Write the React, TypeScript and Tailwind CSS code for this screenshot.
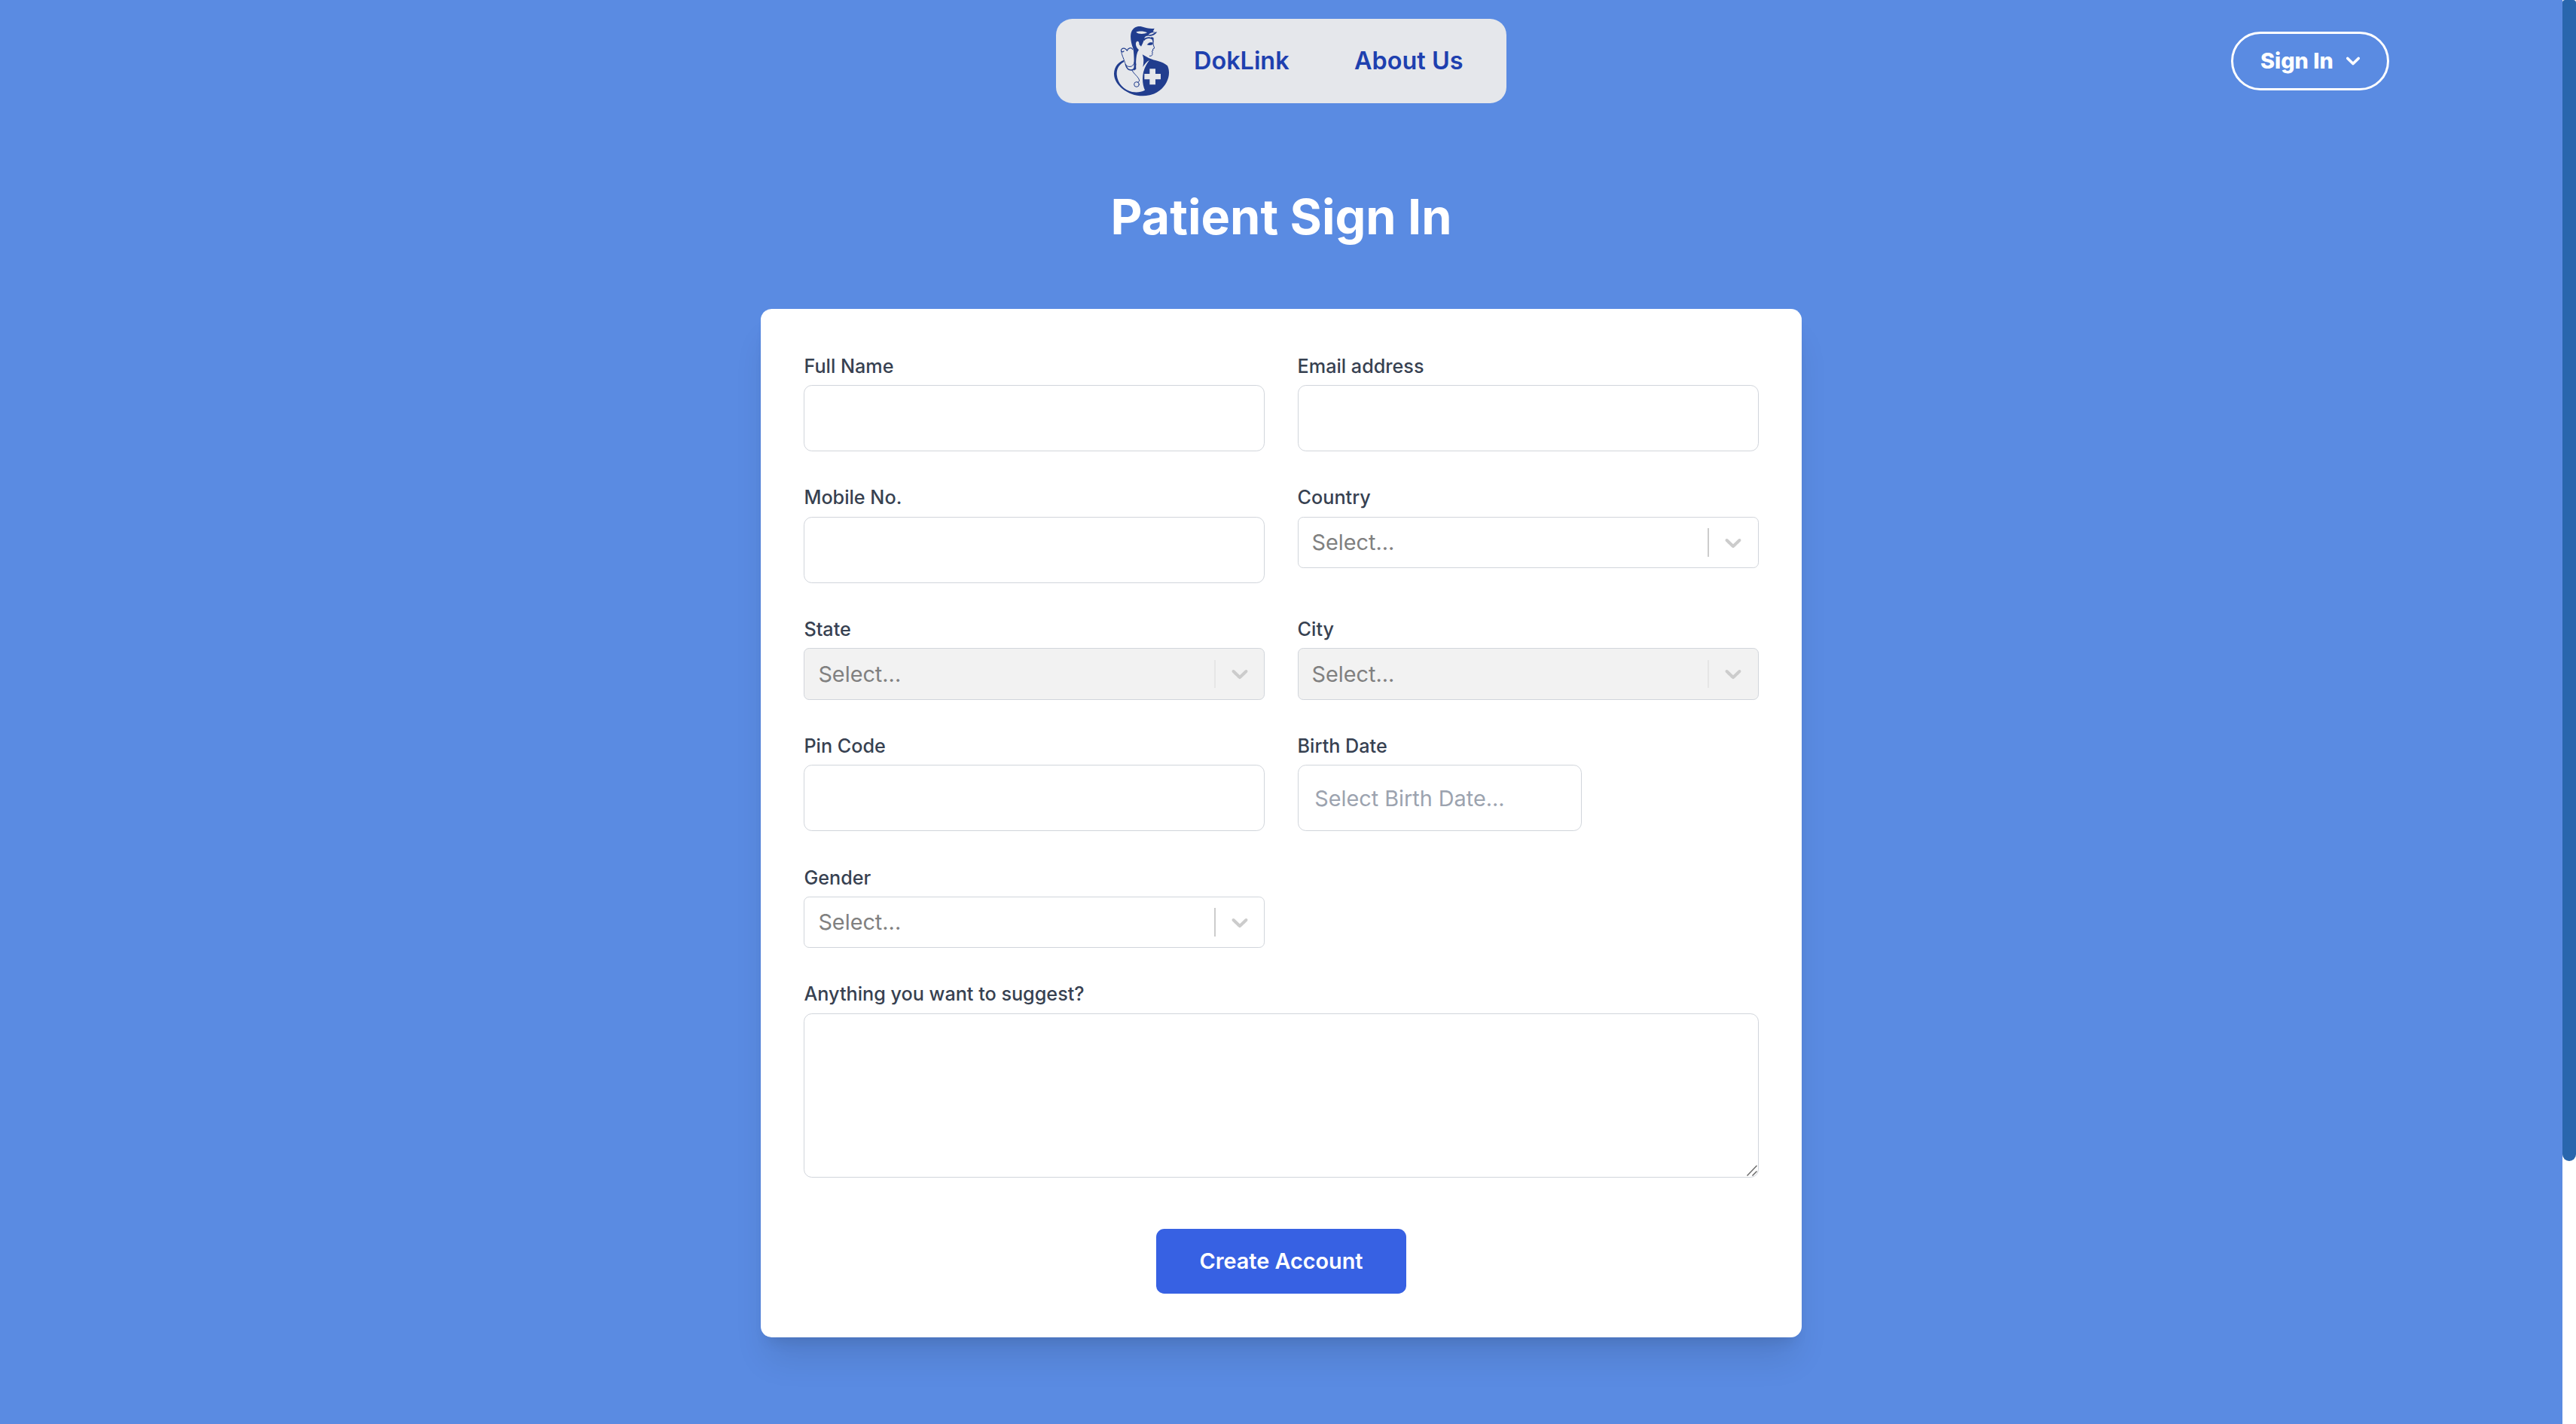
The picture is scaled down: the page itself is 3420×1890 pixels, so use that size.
import type { ReactNode } from "react";

function Logo({ className }: { className: string }) {
  return (
    <svg viewBox="55 40 230 290" className={className} fill="none" aria-hidden="true">
      <g fill="#213d8e">
        <path d="M134 134C126 114 120 84 128 66C134 52 148 44 164 46C180 50 196 57 219 54C216 59 216 62 213 66C218 69 224 70 230 68C223 80 209 86 200 84C192 82 184 84 180 90C178 99 174 112 166 126L158 118C160 108 152 100 146 110C142 120 148 132 157 140C148 150 144 176 146 216L137 222C138 196 139 160 134 134Z" />
        <path d="M174 98C184 87 200 87 206 91L207 87L214 91L216 112L209 98C198 92 186 93 178 104Z" />
        <path d="M189 119C197 109 206 109 213 111L212 119C204 122 196 122 189 119Z" />
        <path d="M171 158L196 172C222 184 250 184 271 203C286 234 272 276 240 301C208 326 164 328 128 315C88 300 58 268 58 234C59 206 76 187 98 180L97 188C79 198 68 214 69 238C72 274 98 300 130 307C150 310 166 308 181 300C171 280 170 250 175 228C180 208 190 192 199 181C188 186 180 196 173 208C176 190 178 176 171 158Z" />
      </g>
      <g stroke="#213d8e" strokeWidth="3" strokeLinecap="round" strokeLinejoin="round">
        <path d="M214 92C214 106 213 114 215 120L219 133L213 136L213 143L208 146L212 149L210 154C213 160 208 165 200 164" />
        <path d="M97 145C90 151 83 143 88 137C94 131 104 132 110 143C114 132 126 128 132 137" strokeWidth="3.6" />
        <path d="M87 145C88 160 97 174 102 192C106 206 116 207 124 206C136 204 141 190 142 172" />
        <path d="M104 198C108 214 114 220 126 220C138 220 143 210 144 196" strokeWidth="4.5" />
        <path d="M130 221C138 238 156 246 159 262C158 266 155 268 152 269" />
        <circle cx="148" cy="277" r="10" />
      </g>
      <path d="M146 69C158 64 178 65 190 71C178 77 156 78 146 69Z" fill="#e5e7eb" />
      <path d="M195 80C199 73 208 69 221 70C215 76 206 80 195 80Z" fill="#e5e7eb" />
      <path d="M200 215H223V235H244V257H223V278H200V257H179V235H200Z" fill="#e5e7eb" />
    </svg>
  );
}

function Field({ label, wide, children }: { label: string; wide?: boolean; children: ReactNode }) {
  return (
    <div className={wide ? "col-span-2" : ""}>
      <label className="mb-1 block text-sm font-medium text-[#374151]">{label}</label>
      {children}
    </div>
  );
}

function TextInput() {
  return (
    <input
      type="text"
      className="block w-full rounded-md border border-[#d1d5db] bg-white p-3 text-base outline-none"
    />
  );
}

function Select({ disabled = false }: { disabled?: boolean }) {
  return (
    <div
      className={
        "flex h-[38px] items-center rounded-[4px] border border-[#d1d5db] " +
        (disabled ? "bg-[#f2f2f2]" : "bg-white")
      }
    >
      <span className="flex-1 pl-[10px] text-base text-[#808080]">Select...</span>
      <span className={"my-2 w-px self-stretch " + (disabled ? "bg-[#e6e6e6]" : "bg-[#cccccc]")} />
      <span className="p-2 text-[#cccccc]">
        <svg viewBox="0 0 20 20" className="block size-5" fill="currentColor" aria-hidden="true">
          <path d="M4.516 7.548c0.436-0.446 1.043-0.481 1.576 0l3.908 3.747 3.908-3.747c0.533-0.481 1.141-0.446 1.574 0 0.436 0.445 0.408 1.197 0 1.615-0.406 0.418-4.695 4.502-4.695 4.502-0.217 0.223-0.502 0.335-0.787 0.335s-0.57-0.112-0.789-0.335c0 0-4.287-4.084-4.695-4.502s-0.436-1.17 0-1.615z" />
        </svg>
      </span>
    </div>
  );
}

function Header() {
  return (
    <header className="grid h-[90px] grid-cols-[1fr_auto_1fr] items-center">
      <div />
      <nav className="flex h-[62.2px] w-[332px] items-center rounded-xl bg-[#e5e7eb] pl-[42px] text-lg font-semibold text-[#1e40af]">
        <Logo className="h-[53.7px] w-[42.6px]" />
        <a className="ml-[17px]">DokLink</a>
        <a className="ml-12">About Us</a>
      </nav>
      <div className="flex justify-end pr-[127.6px]">
        <button className="flex items-center rounded-full border-2 border-white px-5 py-2 text-base font-extrabold text-white">
          Sign In
          <svg viewBox="0 0 10 6" className="ms-[9.8px] size-2.5" fill="none" aria-hidden="true">
            <path d="m1 1 4 4 4-4" stroke="currentColor" strokeWidth="2" strokeLinecap="round" strokeLinejoin="round" />
          </svg>
        </button>
      </div>
    </header>
  );
}

export default function App() {
  return (
    <div className="flex h-[1050px] w-[1900px] overflow-hidden bg-[#5a8be2] font-['Inter',sans-serif] [zoom:1.8]">
      <main className="min-w-0 flex-1">
        <Header />
        <h1 className="mt-[49.8px] text-center text-4xl font-bold text-white">Patient Sign In</h1>
        <form className="mx-auto mt-12 grid w-3xl grid-cols-2 gap-6 rounded-lg bg-white p-8 shadow-xl">
          <Field label="Full Name">
            <TextInput />
          </Field>
          <Field label="Email address">
            <TextInput />
          </Field>
          <Field label="Mobile No.">
            <TextInput />
          </Field>
          <Field label="Country">
            <Select />
          </Field>
          <Field label="State">
            <Select disabled />
          </Field>
          <Field label="City">
            <Select disabled />
          </Field>
          <Field label="Pin Code">
            <TextInput />
          </Field>
          <Field label="Birth Date">
            <input
              type="text"
              placeholder="Select Birth Date..."
              className="block w-[209.6px] rounded-md border border-[#d1d5db] bg-white p-3 text-base outline-none placeholder:text-[#9ca3af]"
            />
          </Field>
          <Field label="Gender">
            <Select />
          </Field>
          <Field label="Anything you want to suggest?" wide>
            <div className="relative">
              <textarea
                rows={4}
                className="block w-full resize-none rounded-md border border-[#d1d5db] bg-white p-3 text-base outline-none"
              />
              <svg viewBox="0 0 14 15" className="absolute right-[1px] bottom-[1px] h-[8.33px] w-[7.78px]" fill="none" aria-hidden="true">
                <path d="M0.5 14.5L13.5 1M7.5 14.5L13.5 8.5" stroke="#6b6b6b" strokeWidth="1.5" />
              </svg>
            </div>
          </Field>
          <div className="col-span-2 mt-[13.9px] flex justify-center">
            <button type="button" className="rounded-md bg-[#3761e3] px-8 py-3 text-base font-semibold text-white">
              Create Account
            </button>
          </div>
        </form>
      </main>
      <div className="w-[10px] bg-white">
        <div className="h-[856px] rounded-t-[2px] rounded-b-[5px] bg-[#2966ad]" />
      </div>
    </div>
  );
}
